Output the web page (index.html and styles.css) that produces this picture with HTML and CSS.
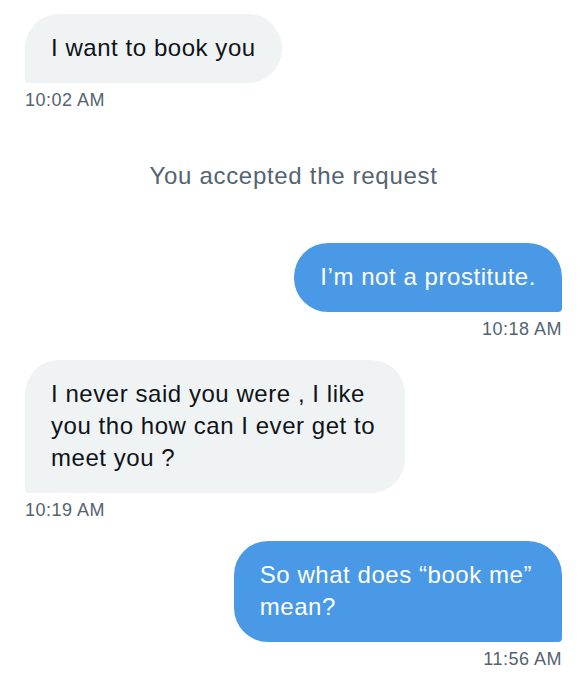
FILE: index.html
```html
<!DOCTYPE html>
<html lang="en">
<head>
    <meta charset="UTF-8">
    <meta name="viewport" content="width=device-width, initial-scale=1.0">
    <title>Messages</title>
    <link rel="stylesheet" href="styles.css">
</head>
<body>
    <div class="thread">
        <div class="msg received">
            <div class="bubble">I want to book you</div>
            <div class="time">10:02 AM</div>
        </div>

        <div class="notice">You accepted the request</div>

        <div class="msg sent">
            <div class="bubble">I’m not a prostitute.</div>
            <div class="time">10:18 AM</div>
        </div>

        <div class="msg received">
            <div class="bubble wrapped">I never said you were , I like<br>you tho how can I ever get to<br>meet you ?</div>
            <div class="time">10:19 AM</div>
        </div>

        <div class="msg sent">
            <div class="bubble wrapped">So what does “book me”<br>mean?</div>
            <div class="time">11:56 AM</div>
        </div>
    </div>
</body>
</html>
```

FILE: styles.css
```css
body {
    margin: 0;
    background-color: #fff;
    font-family: "Liberation Sans", Arial, sans-serif;
    color: #0f1419;
}

.thread {
    padding: 14px 25px 0 25px;
}

.msg {
    display: flex;
    flex-direction: column;
    margin-bottom: 20px;
}

.received {
    align-items: flex-start;
}

.sent {
    align-items: flex-end;
}

.bubble {
    font-size: 24px;
    letter-spacing: 0.55px;
    line-height: 32px;
    padding: 18px 26px 19px;
    border-radius: 34px;
}

.bubble.wrapped {
    padding-right: 30px;
}

.received .bubble {
    background-color: #eff3f4;
    border-bottom-left-radius: 4px;
}

.sent .bubble {
    background-color: #4a99e6;
    color: #fff;
    border-bottom-right-radius: 4px;
}

.time {
    font-size: 18px;
    letter-spacing: 0.5px;
    color: #536471;
    margin-top: 7px;
}

.notice {
    text-align: center;
    font-size: 24px;
    letter-spacing: 0.7px;
    color: #536471;
    margin: 51px 0 53px;
}
```
